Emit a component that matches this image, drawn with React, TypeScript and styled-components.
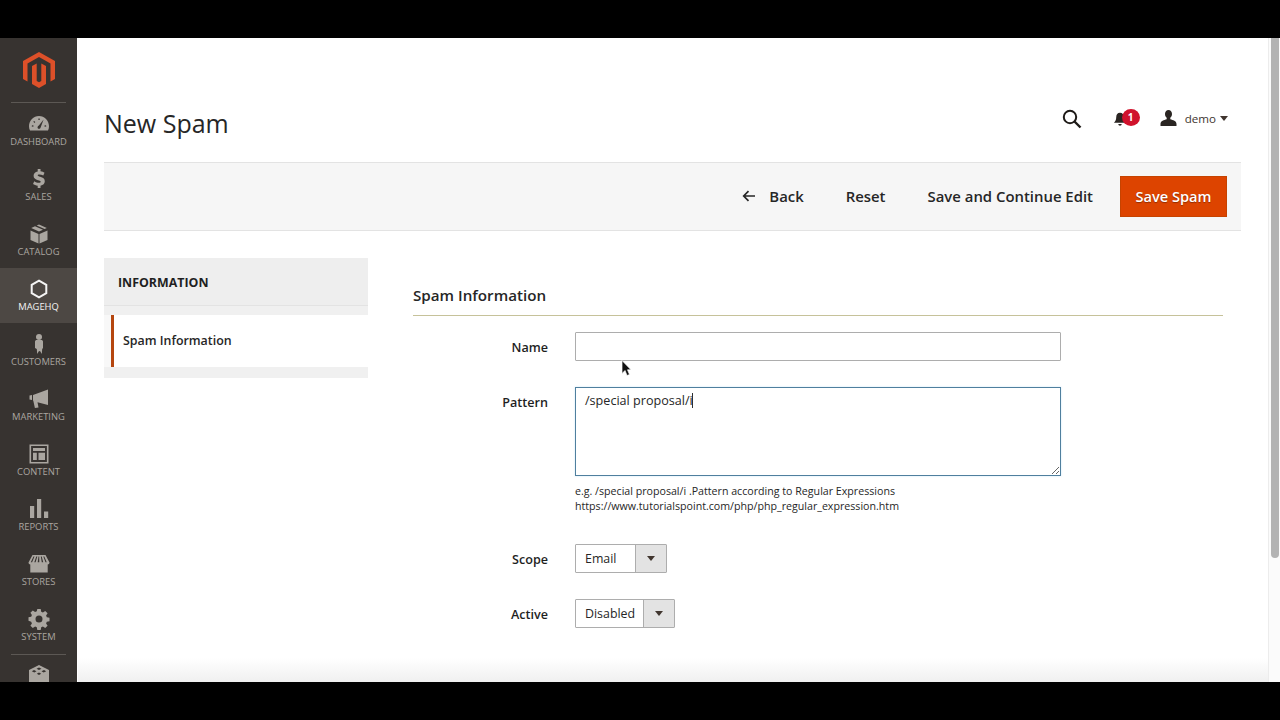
import React from 'react';
import styled, { createGlobalStyle } from 'styled-components';

const GlobalStyle = createGlobalStyle`
  html, body { margin: 0; padding: 0; background: #000; overflow: hidden; }
  body { font-family: "Open Sans", "Liberation Sans", sans-serif; color: #262626; }
`;

const Frame = styled.div`
  width: 1280px;
  height: 720px;
  display: flex;
  flex-direction: column;
  background: #000;
`;
const Bar = styled.div<{ $h: number }>`
  height: ${(p) => p.$h}px;
  flex: none;
  background: #000;
`;
const Shell = styled.div`
  height: 644px;
  display: flex;
  position: relative;
  overflow: hidden;
  background: #fff;
`;

const Sidebar = styled.nav`
  width: 77px;
  flex: none;
  background: #373330;
  display: flex;
  flex-direction: column;
  align-items: stretch;
`;
const LogoWrap = styled.div`
  height: 65px;
  display: flex;
  justify-content: center;
  align-items: flex-start;
  padding-top: 14px;
  box-sizing: border-box;
  margin: 0 11px;
  border-bottom: 1px solid #5c5854;
  flex: none;
`;
const NavList = styled.div`
  display: flex;
  flex-direction: column;
`;
const NavItem = styled.a<{ $active?: boolean }>`
  height: 55px;
  flex: none;
  display: flex;
  flex-direction: column;
  align-items: center;
  justify-content: flex-start;
  padding-top: 10px;
  box-sizing: border-box;
  background: ${(p) => (p.$active ? '#4d4844' : 'transparent')};
  color: ${(p) => (p.$active ? '#f4f4f4' : '#aaa6a0')};
  font-size: 9.4px;
  line-height: 14px;
  text-transform: uppercase;
`;
const NavIcon = styled.svg`
  width: 22px;
  height: 22px;
  flex: none;
  fill: currentColor;
`;
const BottomRule = styled.div`
  height: 1px;
  background: #5c5854;
  margin: 1px 11px 10px;
  flex: none;
`;
const LegoWrap = styled.div`
  display: flex;
  justify-content: center;
  color: #aaa6a0;
`;

const Main = styled.main`
  flex: 1;
  min-width: 0;
  padding: 0 27px 0 27px;
`;
const PageHeader = styled.header`
  height: 124px;
  display: flex;
  justify-content: space-between;
  align-items: flex-start;
`;
const Title = styled.h1`
  margin: 67px 0 0;
  font-size: 25px;
  line-height: 36px;
  font-weight: 400;
  color: #262626;
`;
const HeaderActions = styled.div`
  display: flex;
  align-items: center;
  margin-top: 71px;
  height: 18px;
  padding-right: 13px;
`;
const SearchIcon = styled.svg`
  width: 20px;
  height: 20px;
  margin: 2px 31px 0 0;
`;
const BellWrap = styled.div`
  position: relative;
  width: 16px;
  height: 18px;
  margin-right: 31px;
  svg {
    display: block;
    margin-top: 3px;
  }
`;
const Badge = styled.span`
  position: absolute;
  left: 9px;
  top: 0;
  width: 18px;
  height: 17px;
  border-radius: 50%;
  background: #d0122c;
  color: #fff;
  font-size: 10px;
  line-height: 17px;
  font-weight: 700;
  text-align: center;
`;
const UserName = styled.span`
  font-size: 11.6px;
  color: #41362f;
  margin: 0 4px 0 8px;
`;
const Caret = styled.span`
  width: 0;
  height: 0;
  border-left: 4px solid transparent;
  border-right: 4px solid transparent;
  border-top: 5px solid #41362f;
`;

const Toolbar = styled.div`
  height: 69px;
  box-sizing: border-box;
  background: #f6f6f6;
  border-top: 1px solid #e3e3e3;
  border-bottom: 1px solid #e3e3e3;
  display: flex;
  justify-content: flex-end;
  align-items: center;
  padding-right: 14px;
`;
const TextButton = styled.button`
  border: 0;
  background: none;
  padding: 0 0 2px;
  margin-right: 42px;
  font: 600 14.9px/22px "Open Sans", sans-serif;
  color: #262626;
  display: flex;
  align-items: center;
`;
const Arrow = styled.svg`
  width: 14px;
  height: 12px;
  margin-right: 13px;
`;
const LastTextButton = styled(TextButton)`
  margin-right: 27px;
`;
const PrimaryButton = styled.button`
  width: 107px;
  height: 41px;
  border: 1px solid #c64300;
  background: #dd4400;
  color: #fff;
  font: 600 14.6px/22px "Open Sans", sans-serif;
  text-shadow: 0 1px 1px rgba(0, 0, 0, 0.35);
  padding: 0 0 2px;
`;

const Columns = styled.div`
  display: flex;
  padding-top: 27px;
  gap: 45px;
`;
const SidePanel = styled.aside`
  width: 264px;
  flex: none;
  height: 120px;
  background: #f0f0f0;
  box-sizing: border-box;
`;
const PanelHead = styled.div`
  height: 48px;
  background: #eeeeee;
  border-bottom: 1px solid #e3e3e3;
  box-sizing: border-box;
  padding-left: 14px;
  font-size: 12.4px;
  line-height: 49px;
  font-weight: 700;
  color: #1f1f1f;
`;
const PanelRow = styled.div`
  margin-top: 9px;
  padding-left: 7px;
  background: #f8f8f8;
`;
const PanelItem = styled.div`
  height: 52px;
  box-sizing: border-box;
  border-left: 3px solid #b5460f;
  background: #fff;
  padding-left: 9px;
  font-size: 12.4px;
  line-height: 51px;
  font-weight: 600;
  color: #262626;
`;

const FormArea = styled.section`
  flex: 1;
  min-width: 0;
  padding-right: 18px;
`;
const SectionTitle = styled.h2`
  margin: 0;
  height: 58px;
  box-sizing: border-box;
  padding-top: 26px;
  border-bottom: 1px solid #c6c29a;
  font-size: 15.2px;
  line-height: 22px;
  font-weight: 600;
  color: #262626;
`;
const Row = styled.div<{ $gap: number }>`
  display: grid;
  grid-template-columns: 135px 486px;
  column-gap: 27px;
  align-items: start;
  margin-top: ${(p) => p.$gap}px;
`;
const Label = styled.label`
  text-align: right;
  font-size: 12.6px;
  line-height: 18px;
  font-weight: 600;
  color: #1f1f1f;
  padding-top: 7px;
`;
const NameInput = styled.input`
  display: block;
  width: 486px;
  height: 29px;
  box-sizing: border-box;
  border: 1px solid #adadad;
  background: #fff;
  outline: 0;
  border-radius: 1px;
`;
const AreaWrap = styled.div`
  position: relative;
  width: 486px;
  height: 89px;
`;
const PatternArea = styled.textarea`
  display: block;
  width: 486px;
  height: 89px;
  box-sizing: border-box;
  margin: 0;
  border: 1px solid #4f7f9e;
  border-radius: 0;
  outline: 0;
  background: #fff;
  resize: vertical;
  padding: 4px 9px;
  font: 400 12.6px/18px "Open Sans", sans-serif;
  color: #262626;
  caret-color: transparent;
  box-shadow: 0 0 2px rgba(0, 139, 219, 0.2);
`;
const TextCaret = styled.span`
  position: absolute;
  left: 117px;
  top: 6px;
  width: 1px;
  height: 15px;
  background: #303030;
`;
const Note = styled.div`
  margin-top: 8px;
  font-size: 10.65px;
  line-height: 15px;
  color: #262626;
`;
const SelectBox = styled.div<{ $w: number }>`
  width: ${(p) => p.$w}px;
  height: 29px;
  box-sizing: border-box;
  border: 1px solid #adadad;
  border-radius: 1px;
  display: flex;
  font-size: 12.4px;
  line-height: 27px;
  color: #262626;
`;
const SelectValue = styled.span`
  flex: 1;
  padding-left: 9px;
`;
const SelectArrow = styled.span`
  width: 31px;
  flex: none;
  background: #e3e3e3;
  border-left: 1px solid #adadad;
  box-sizing: border-box;
  display: flex;
  align-items: center;
  justify-content: center;
  &::after {
    content: '';
    border-left: 4px solid transparent;
    border-right: 4px solid transparent;
    border-top: 5px solid #41362f;
  }
`;

const Scrollbar = styled.div`
  width: 12px;
  flex: none;
  background: #fbfbfb;
  border-left: 1px solid #ececec;
  box-sizing: border-box;
  padding: 0 1px 0 2px;
`;
const Thumb = styled.div`
  height: 520px;
  background: #b3b3b3;
  border-radius: 0 0 4px 4px;
`;
const BottomFade = styled.div`
  position: absolute;
  left: 78px;
  right: 12px;
  bottom: 0;
  height: 24px;
  background: linear-gradient(to bottom, rgba(240, 240, 240, 0), rgba(236, 236, 236, 0.8));
  pointer-events: none;
`;
const Pointer = styled.svg`
  position: absolute;
  left: 621px;
  top: 322px;
  width: 11px;
  height: 17px;
`;

const navItems: { label: string; active?: boolean; icon: React.ReactNode }[] = [
  {
    label: 'Dashboard',
    icon: (
      <path
        fillRule="evenodd"
        d="M11 3C5.5 3 1 7.6 1 13.2c0 1.6.3 3.1 1 4.3h18c.7-1.2 1-2.7 1-4.3C21 7.6 16.5 3 11 3zm4.6 3.6-3 7.800c-.2 1-1 1.600-1.800 1.400-.9-.2-1.400-1-1.200-1.900.2-.7.7-1.100 1.300-1.300l4.700-6zM4 12.200l1.600.4-.3 1.200-1.600-.4.3-1.200zm2.100-4.300 1.200 1.100-.8.9-1.200-1.100.8-.9zM10.400 5.400h1.300v1.700h-1.300V5.400zM18 12.200l.3 1.200-1.600.4-.3-1.200 1.600-.4z"
      />
    ),
  },
  {
    label: 'Sales',
    icon: (
      <path d="M9.700 1h2.800v2.300c1.700.2 3 .7 4 1.400l-1.200 2.900c-1.300-.8-2.700-1.200-4-1.200-1.100 0-1.600.3-1.600.9 0 .7.8 1 2.500 1.500 2.800.8 4.600 1.900 4.600 4.500 0 2.300-1.600 3.900-4.300 4.400V20H9.700v-2.200c-1.900-.2-3.500-.8-4.700-1.700l1.300-2.900c1.400 1 3 1.600 4.600 1.600 1.200 0 1.800-.3 1.800-1 0-.7-.8-1.100-2.700-1.600-2.700-.8-4.400-1.900-4.400-4.400 0-2.200 1.500-3.900 4.100-4.400V1z" />
    ),
  },
  {
    label: 'Catalog',
    icon: (
      <>
        <path d="M2.500 7.500 10.500 11v9.500l-8-3.600V7.500zM19.500 7.500V16.900l-8 3.600V11l8-3.500z" />
        <path d="M11 1.500 18.800 5 16.600 6 8.700 2.500 11 1.500zM7 3.300 15 6.800 11 8.600 3.200 5 7 3.300z" />
      </>
    ),
  },
  {
    label: 'MageHQ',
    active: true,
    icon: <path fill="none" stroke="currentColor" strokeWidth="2" d="M11 2.600 18.300 6.800V15.200L11 19.400 3.700 15.200V6.800z" />,
  },
  {
    label: 'Customers',
    icon: (
      <>
        <circle cx="11" cy="4" r="3" />
        <path d="M7 8.500C7 7.600 7.800 7 8.700 7h4.600c.9 0 1.700.6 1.700 1.500V15l-.8 1-.4 5-1.800-3-.5.2-.5-.2-1.800 3-.4-5L7 15V8.500z" />
      </>
    ),
  },
  {
    label: 'Marketing',
    icon: (
      <path d="M20 1.500V17L9.500 14.300l1 5.200-3.600.5-1.600-7.200L5 12.600V7l15-5.500zM1.500 7.600 4 7v5l-2.500-.6V7.600z" />
    ),
  },
  {
    label: 'Content',
    icon: (
      <path
        fillRule="evenodd"
        d="M1.500 1.500h19v19h-19v-19zm1.600 1.600v15.800h15.800V3.100H3.100zM5 5h12v3H5V5zm0 4.700h3.800V17H5V9.700zm5.500 0H17V17h-6.500V9.700z"
      />
    ),
  },
  {
    label: 'Reports',
    icon: <path d="M2 8h4.200v12H2V8zM9 1h4.200v19H9V1zM16 13.500h4.200V20H16v-6.500z" />,
  },
  {
    label: 'Stores',
    icon: (
      <path
        fillRule="evenodd"
        d="M4.500 2h13L21.500 9.500c0 1.300-.9 2-1.800 2v8H2.300v-8c-.9 0-1.800-.7-1.800-2L4.500 2zm1 1.500L2.800 9.200h1.300L6.500 3.500h-1zm2.800 0L6.300 9.200h1.300l1.700-5.700h-1zm2.200 0-.8 5.700h1.600l-.1-5.700h-.7zm2.300 0 1 5.700h1.400l-1.500-5.700h-.9zm2.500 0 2.200 5.700h1.200l-2.400-5.700h-1z"
      />
    ),
  },
  {
    label: 'System',
    icon: (
      <path
        fillRule="evenodd"
        d="M9.300 1h3.400l.5 2.700 1.700.7 2.300-1.500 2.400 2.400-1.500 2.300.7 1.700 2.700.5v3.400l-2.700.5-.7 1.700 1.500 2.300-2.400 2.400-2.300-1.500-1.700.7-.5 2.700H9.300l-.5-2.700-1.700-.7-2.300 1.500-2.400-2.400 1.500-2.300-.7-1.700L.5 12.700V9.300l2.700-.5.7-1.700-1.500-2.300 2.400-2.400 2.300 1.500 1.700-.7.5-2.200zM11 7.500a3.500 3.500 0 1 0 0 7 3.500 3.500 0 0 0 0-7z"
      />
    ),
  },
];

function MagentoLogo() {
  return (
    <svg width="32" height="36" viewBox="0 0 32 36" fill="#dd5029">
      <path d="M16 0 32 9V27L27.500 29.600V11.600L16 5 4.500 11.600V29.600L0 27V9z" />
      <path d="M13.700 11.400 9 14V32L16 36 23 32V14L18.300 11.400V29L16 30.300 13.700 29z" />
    </svg>
  );
}

export default function App() {
  return (
    <Frame>
      <GlobalStyle />
      <Bar $h={38} />
      <Shell>
        <Sidebar>
          <LogoWrap>
            <MagentoLogo />
          </LogoWrap>
          <NavList>
            {navItems.map((item) => (
              <NavItem key={item.label} $active={item.active}>
                <NavIcon viewBox="0 0 22 22">{item.icon}</NavIcon>
                {item.label}
              </NavItem>
            ))}
          </NavList>
          <BottomRule />
          <LegoWrap>
            <NavIcon viewBox="0 0 22 22">
              <path
                fillRule="evenodd"
                d="M11 0 21 5V17L11 22 1 17V5zM11 2.500 8.500 3.800 11 5.100l2.500-1.300zM6 5 3.800 6.200 6.300 7.500 8.500 6.300zM16 5l-2.500 1.300 2.200 1.200 2.500-1.300zM11 7.500 8.800 8.700 11 10l2.200-1.300z"
              />
            </NavIcon>
          </LegoWrap>
        </Sidebar>

        <Main>
          <PageHeader>
            <Title>New Spam</Title>
            <HeaderActions>
              <SearchIcon viewBox="0 0 20 20" fill="none" stroke="#1f1b18" strokeWidth="2">
                <circle cx="8" cy="8" r="6.200" />
                <path d="m12.500 12.500 6 6" strokeWidth="2.400" />
              </SearchIcon>
              <BellWrap>
                <svg width="14" height="15" viewBox="0 0 16 18" fill="#2a2522">
                  <path d="M8 1c3 0 4.500 2.300 4.500 5 0 3.500 1.200 5.500 2.800 7H.7c1.600-1.500 2.800-3.500 2.800-7 0-2.700 1.500-5 4.500-5z" />
                  <path d="M6 14.500h4c0 1.200-.9 2-2 2s-2-.8-2-2z" />
                </svg>
                <Badge>1</Badge>
              </BellWrap>
              <svg width="17" height="16" viewBox="0 0 17 16" fill="#2a2522">
                <path d="M8.500 0c2.200 0 3.500 1.700 3.500 4 0 1.600-.7 3-1.700 3.800v1.500c2.600.8 6.200 1.700 6.200 4.700v2H.5v-2c0-3 3.600-3.900 6.200-4.700V7.800C5.700 7 5 5.600 5 4c0-2.300 1.300-4 3.500-4z" />
              </svg>
              <UserName>demo</UserName>
              <Caret />
            </HeaderActions>
          </PageHeader>

          <Toolbar>
            <TextButton type="button">
              <Arrow viewBox="0 0 14 12" fill="none" stroke="#262626" strokeWidth="1.700">
                <path d="M13 6H2M6.500 1.200 1.700 6l4.800 4.800" />
              </Arrow>
              Back
            </TextButton>
            <TextButton type="button">Reset</TextButton>
            <LastTextButton type="button">Save and Continue Edit</LastTextButton>
            <PrimaryButton type="button">Save Spam</PrimaryButton>
          </Toolbar>

          <Columns>
            <SidePanel>
              <PanelHead>INFORMATION</PanelHead>
              <PanelRow>
                <PanelItem>Spam Information</PanelItem>
              </PanelRow>
            </SidePanel>

            <FormArea>
              <SectionTitle>Spam Information</SectionTitle>
              <Row $gap={16}>
                <Label>Name</Label>
                <NameInput type="text" />
              </Row>
              <Row $gap={26}>
                <Label>Pattern</Label>
                <div>
                  <AreaWrap>
                    <PatternArea defaultValue="/special proposal/i" />
                    <TextCaret />
                  </AreaWrap>
                  <Note>
                    e.g. /special proposal/i .Pattern according to Regular Expressions
                    <br />
                    https://www.tutorialspoint.com/php/php_regular_expression.htm
                  </Note>
                </div>
              </Row>
              <Row $gap={30}>
                <Label>Scope</Label>
                <SelectBox $w={92}>
                  <SelectValue>Email</SelectValue>
                  <SelectArrow />
                </SelectBox>
              </Row>
              <Row $gap={26}>
                <Label>Active</Label>
                <SelectBox $w={100}>
                  <SelectValue>Disabled</SelectValue>
                  <SelectArrow />
                </SelectBox>
              </Row>
            </FormArea>
          </Columns>
        </Main>

        <Scrollbar>
          <Thumb />
        </Scrollbar>
        <BottomFade />
        <Pointer viewBox="0 0 11 17">
          <path d="M1 .5v13l3-3 2 5 2.500-1-2-4.700H10z" fill="#111" stroke="#fff" strokeWidth=".7" />
        </Pointer>
      </Shell>
      <Bar $h={38} />
    </Frame>
  );
}
